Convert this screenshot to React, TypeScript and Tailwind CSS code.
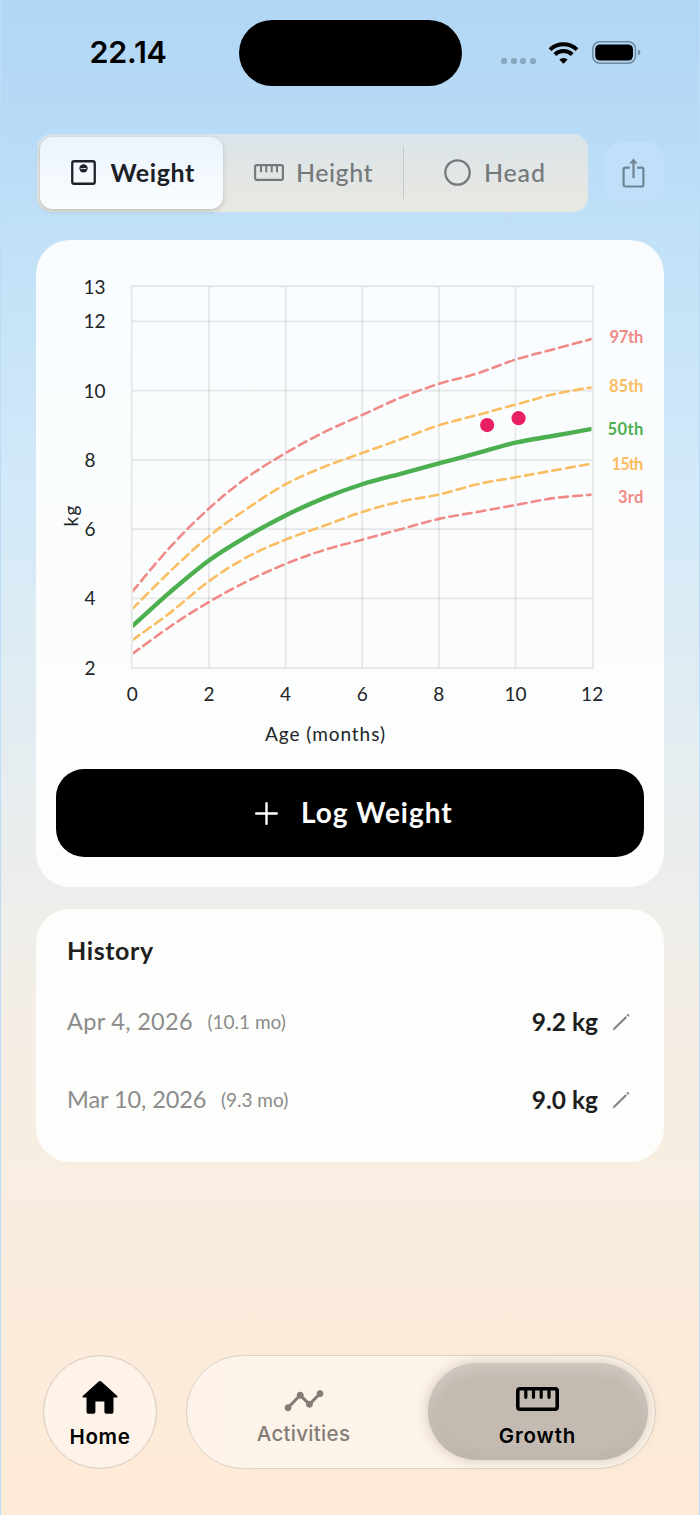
import { useState, type ReactNode } from 'react';
import clsx from 'clsx';

/**
 * GrowthScreen — weight-for-age chart with percentile curves,
 * measurement history and the bottom tab bar
 */

interface Curve {
  label: string;
  labelY: number;
  labelX: number;
  color: string;
  dashed: boolean;
  values: number[];
}

// One value per month, 0–12
const CURVES: Curve[] = [
  { label: '97th', labelX: 609.5, labelY: 342.5, color: '#f08a86', dashed: true, values: [4.2, 5.5, 6.6, 7.5, 8.2, 8.8, 9.3, 9.8, 10.2, 10.5, 10.9, 11.2, 11.5] },
  { label: '85th', labelX: 609, labelY: 392, color: '#fabd61', dashed: true, values: [3.7, 4.8, 5.8, 6.6, 7.3, 7.8, 8.2, 8.6, 9.0, 9.3, 9.6, 9.9, 10.1] },
  { label: '15th', labelX: 611.5, labelY: 470, color: '#fabd61', dashed: true, values: [2.8, 3.6, 4.5, 5.2, 5.7, 6.1, 6.5, 6.8, 7.0, 7.3, 7.5, 7.7, 7.9] },
  { label: '3rd', labelX: 618, labelY: 502.5, color: '#f08a86', dashed: true, values: [2.4, 3.2, 3.9, 4.5, 5.0, 5.4, 5.7, 6.0, 6.3, 6.5, 6.7, 6.9, 7.0] },
  { label: '50th', labelX: 607.5, labelY: 434.5, color: '#4caf50', dashed: false, values: [3.2, 4.2, 5.1, 5.8, 6.4, 6.9, 7.3, 7.6, 7.9, 8.2, 8.5, 8.7, 8.9] },
];

const MEASUREMENTS = [
  { date: 'Apr 4, 2026', age: '(10.1 mo)', months: 10.08, kg: 9.2 },
  { date: 'Mar 10, 2026', age: '(9.3 mo)', months: 9.26, kg: 9.0 },
];

const px = (month: number) => 132.3 + month * 38.32;
const py = (kg: number) => 667.8 - (kg - 2) * 34.63;

function curvePath(values: number[]) {
  const pts = values.map((v, i) => [px(i), py(v)]);
  let d = `M${pts[0][0]} ${pts[0][1]}`;
  for (let i = 1; i < pts.length; i++) {
    const a = pts[Math.max(i - 2, 0)];
    const b = pts[i - 1];
    const c = pts[i];
    const e = pts[Math.min(i + 1, pts.length - 1)];
    const k = 0.17;
    d += `C${b[0] + (c[0] - a[0]) * k} ${b[1] + (c[1] - a[1]) * k} ${c[0] - (e[0] - b[0]) * k} ${c[1] - (e[1] - b[1]) * k} ${c[0]} ${c[1]}`;
  }
  return d;
}

function ScaleIcon() {
  return (
    <svg width="25" height="25" viewBox="0 0 24 24" fill="none">
      <rect x="1.2" y="1.2" width="21.6" height="21.6" rx="1.8" stroke="currentColor" strokeWidth="2.2" />
      <circle cx="12" cy="8" r="4" fill="currentColor" />
      <path d="M9.2 8.2h5.6" stroke="#c9cfd6" strokeWidth="1.1" />
    </svg>
  );
}

function RulerIcon({ bold = false }: { bold?: boolean }) {
  return bold ? (
    <svg width="43" height="24" viewBox="0 0 43 24" fill="none" stroke="currentColor">
      <rect x="1.8" y="1.8" width="39.4" height="20.4" rx="2.2" strokeWidth="3.6" />
      <path d="M9.8 3v7.300M17.500 3v7.300M25.200 3v7.300M33 3v7.300" strokeWidth="3.2" strokeLinecap="round" />
    </svg>
  ) : (
    <svg width="30" height="17" viewBox="0 0 30 17" fill="none" stroke="currentColor">
      <rect x="1.1" y="1.1" width="27.8" height="14.8" rx="1.6" strokeWidth="2.2" />
      <path d="M7 1.500v6.700M12.300 1.500v6.700M17.700 1.500v6.700M23 1.500v6.700" strokeWidth="2" />
    </svg>
  );
}

function StatusBar() {
  return (
    <div className="flex h-[134px] shrink-0 items-start pt-5">
      <div className="w-[237.5px] pl-[88.500px] pt-[12px] font-['Inter'] text-[30.500px] font-semibold leading-[40px] tracking-[-0.2px]">
        22.14
      </div>
      <div className="h-[66px] w-[223px] rounded-full bg-black" />
      <div className="flex items-center pt-[19px]">
        <div className="ml-[39.500px] mt-[18px] flex gap-[3.400px]">
          {[0, 1, 2, 3].map((i) => (
            <span key={i} className="h-[6.400px] w-[6.200px] rounded-[2.500px] bg-[#89a7be]" />
          ))}
        </div>
        <svg className="ml-[12.500px] mt-[2px]" width="31" height="24" viewBox="0 0 31 24" fill="none" stroke="#000" strokeWidth="4">
          <path d="M2 8.600a19.800 19.800 0 0 1 27 0" />
          <path d="M6.800 13.500a12.800 12.800 0 0 1 17.400 0" />
          <path d="M15.500 22.800l-4.200-4.300a6.300 6.300 0 0 1 8.400 0z" fill="#000" stroke="none" />
        </svg>
        <svg className="ml-[13px] mt-[1px]" width="49" height="23" viewBox="0 0 49 23">
          <rect x=".8" y=".8" width="42.6" height="21.4" rx="7" fill="none" stroke="#6f8ba0" strokeWidth="1.5" />
          <rect x="3.2" y="3.4" width="37.8" height="16.2" rx="4.8" />
          <path d="M46 8.500q2.400 1.100 2.400 3t-2.400 3z" fill="#6f8ba0" />
        </svg>
      </div>
    </div>
  );
}

function Segment({
  active,
  onClick,
  className,
  children,
}: {
  active: boolean;
  onClick: () => void;
  className: string;
  children: ReactNode;
}) {
  return (
    <button
      onClick={onClick}
      className={clsx(
        'flex h-[72px] items-center whitespace-nowrap rounded-[13px] text-[25px]',
        active
          ? 'bg-linear-to-b from-[#ebf4fd] to-[#fafdfe] font-bold text-[#1b2126] shadow-[0_2px_5px_rgba(0,0,0,0.18)]'
          : 'font-medium text-[#74797b]',
        className,
      )}
    >
      {children}
    </button>
  );
}

function GrowthChart() {
  return (
    <svg
      width="627"
      height="529"
      viewBox="36 240 627 529"
      fontFamily="Lato, 'Open Sans', sans-serif"
      className="block shrink-0"
    >
      <defs>
        <clipPath id="plot">
          <rect x="133" y="287" width="458.5" height="381" />
        </clipPath>
      </defs>

      {/* Grid */}
      <g stroke="#000" strokeOpacity=".085" strokeWidth="1.8">
        <rect x="131.7" y="286.2" width="461.4" height="381.8" fill="none" />
        {[2, 4, 6, 8, 10].map((m) => (
          <path key={m} d={`M${px(m)} 287V667.5`} />
        ))}
        {[4, 6, 8, 10, 12].map((kg) => (
          <path key={kg} d={`M132.5 ${py(kg) - 0.2}H592.5`} />
        ))}
      </g>

      {/* Percentile curves */}
      <g clipPath="url(#plot)" fill="none">
        {CURVES.map((c) => (
          <path
            key={c.label}
            d={curvePath(c.values)}
            stroke={c.color}
            strokeWidth={c.dashed ? 2.6 : 4.4}
            strokeLinecap={c.dashed ? 'round' : 'butt'}
            strokeDasharray={c.dashed ? '8.7 5.25' : undefined}
          />
        ))}
      </g>

      {/* Logged measurements */}
      {MEASUREMENTS.map((m) => (
        <circle key={m.date} cx={px(m.months)} cy={py(m.kg) - 0.3} r="8.1" fill="#e91e63" stroke="#fff" strokeWidth="2" />
      ))}

      {/* Axis labels */}
      <g fontSize="19" fill="#222527">
        {[2, 4, 6, 8, 10, 12, 13].map((kg) => (
          <text key={kg} x={kg > 9 ? 83.5 : 84.5} y={py(kg) + 6.8}>
            {kg}
          </text>
        ))}
        {[0, 2, 4, 6, 8, 10, 12].map((m) => (
          <text key={m} x={px(m)} y="701" textAnchor="middle">
            {m}
          </text>
        ))}
        <text x="265" y="740.5" textLength="120">
          Age (months)
        </text>
        <text x="77.5" y="526.5" transform="rotate(-90 77.5 526.5)" textLength="21">
          kg
        </text>
      </g>
      <g fontSize="16.5" fontWeight="700">
        {CURVES.map((c) => (
          <text key={c.label} x={c.labelX} y={c.labelY} fill={c.color} textLength={643.3 - c.labelX}>
            {c.label}
          </text>
        ))}
      </g>
    </svg>
  );
}

function HistoryRow({ date, age, kg, dateClass }: { date: string; age: string; kg: number; dateClass: string }) {
  return (
    <div className="flex h-[78px] items-center whitespace-nowrap">
      <span className={clsx('text-[23.500px] text-[#8b8c8b]', dateClass)}>{date}</span>
      <span className="ml-[14.500px] text-[19px] text-[#8b8c8b]">{age}</span>
      <span className="ml-auto text-[24.500px] font-bold text-[#1d1f1f]">{kg.toFixed(1)} kg</span>
      <svg className="ml-[14px]" width="18" height="18" viewBox="0 0 18 18" stroke="#858583" strokeLinecap="round">
        <path d="M1.200 16.600L2 14.800 13.500 3.500l1.200 1.200L3.200 16z" fill="#858583" strokeWidth=".7" />
        <path d="M15.700 2l.5.5" strokeWidth="2.1" />
      </svg>
    </div>
  );
}

export default function App() {
  const [metric, setMetric] = useState('weight');

  return (
    <div className="flex h-[1515px] w-[700px] flex-col overflow-hidden border-x border-[#bddcf5] font-[Lato,'Open_Sans',sans-serif] text-black [background-image:linear-gradient(180deg,#b1d7f5_0%,#b7daf6_8%,#c2e1f7_16%,#d2e9fa_32%,#daebf4_40%,#e6edf0_51%,#eeeeeb_60%,#f4eee6_67%,#f7eee2_76%,#fbebdb_88%,#feebd7_100%)]">
      <StatusBar />

      {/* Metric selector */}
      <div className="flex h-[77px] shrink-0 items-center px-[35.500px]">
        <div className="flex h-[78px] w-[552px] items-center rounded-[15px] bg-linear-to-b from-[#dae4e9] to-[#eae8e1] px-[3px]">
          <Segment active={metric === 'weight'} onClick={() => setMetric('weight')} className="w-[183px] pl-[31px]">
            <ScaleIcon />
            <span className="ml-[15px] tracking-[0.600px]">Weight</span>
          </Segment>
          <Segment active={metric === 'height'} onClick={() => setMetric('height')} className="w-[180px] pl-[31.500px]">
            <RulerIcon />
            <span className="ml-[12px] tracking-[0.500px]">Height</span>
          </Segment>
          <div className="h-[53px] w-[1.500px] bg-[#c5cac9]" />
          <Segment active={metric === 'head'} onClick={() => setMetric('head')} className="flex-1 pl-[40px]">
            <svg width="27" height="27" viewBox="0 0 27 27" fill="none">
              <circle cx="13.5" cy="13.5" r="12.2" stroke="currentColor" strokeWidth="2.3" />
            </svg>
            <span className="ml-[13px] tracking-[0.800px]">Head</span>
          </Segment>
        </div>
        <button
          aria-label="Share"
          className="ml-[15.500px] flex h-[61px] w-[60px] items-center justify-center rounded-[18px] bg-[#c1dff8] text-[#6e8494]"
        >
          <svg width="23" height="30" viewBox="0 0 22 30" fill="none" stroke="currentColor" strokeWidth="2.2">
            <path d="M7.300 9.700H2.800A1.700 1.700 0 0 0 1.100 11.400v15.400a1.700 1.700 0 0 0 1.700 1.700h16.400a1.700 1.700 0 0 0 1.700-1.700V11.400a1.700 1.700 0 0 0-1.700-1.700h-4.500" />
            <path d="M11 4v16" />
            <path d="M11 .6l4.200 4.800H6.800z" fill="currentColor" stroke="none" />
          </svg>
        </button>
      </div>

      {/* Chart card */}
      <div className="mx-[35px] mt-[29px] flex h-[647px] shrink-0 flex-col rounded-[34px] bg-linear-to-b from-[#f9fcff] via-[#fbfdfd] to-[#fdfdfd]">
        <GrowthChart />
        <button className="mx-5 flex h-[88px] shrink-0 items-center rounded-[28px] bg-black pl-[199px] text-[28px] font-bold text-white">
          <svg width="23" height="23" viewBox="0 0 23 23" stroke="#fff" strokeWidth="2.4" strokeLinecap="round">
            <path d="M11.500 1.200v20.600M1.200 11.500h20.600" />
          </svg>
          <span className="-mt-[2px] ml-[23px] tracking-[1px]">Log Weight</span>
        </button>
      </div>

      {/* History card */}
      <div className="mx-[35px] mt-[22px] h-[253px] shrink-0 rounded-[34px] bg-[#fdfdfb] pl-[31px] pr-[34px] pt-[24px]">
        <h2 className="-mt-px h-[51px] text-[25px] font-bold leading-[36px] tracking-[0.600px] text-[#1f2121]">History</h2>
        {MEASUREMENTS.map((m, i) => (
          <HistoryRow
            key={m.date}
            date={m.date}
            age={m.age}
            kg={m.kg}
            dateClass={i === 0 ? 'tracking-[0.300px]' : 'tracking-[-0.080px]'}
          />
        ))}
      </div>

      {/* Tab bar */}
      <nav className="mb-[46.500px] mt-auto flex shrink-0 gap-[28.500px] pl-[42px] font-['Inter'] text-[20.500px] font-medium leading-[24px]">
        <button className="flex h-[114px] w-[114px] flex-col items-center rounded-full border-[1.500px] border-[#d9cbbc] bg-[#fdf3e9] pt-[25.500px]">
          <svg width="36" height="33" viewBox="0 0 36 33">
            <path d="M18 0q.7 0 1.300.6L35.300 15q.8 1.200-.7 1.500H31.500V31q0 1.800-1.800 1.800h-5.500q-1.800 0-1.800-1.800V20.500h-9V31q0 1.800-1.800 1.800H6.300Q4.500 32.800 4.500 31V16.500H1.400Q-.1 16.200.7 15L16.700.6Q17.300 0 18 0z" />
          </svg>
          <span className="mt-[10.500px] font-semibold tracking-[0.700px]">Home</span>
        </button>
        <div className="flex h-[114px] w-[470px] items-center rounded-full border-[1.500px] border-[#ddd2c6] bg-linear-to-r from-[#fdf3ea] to-[#fef5e9] pr-[7px]">
          <button className="flex h-full flex-1 flex-col items-center pr-[7px] pt-[34px] text-[#827d77]">
            <svg width="40" height="22" viewBox="0 0 40 22" fill="currentColor" stroke="currentColor">
              <path d="M4 17.800L16.200 5.200 25.400 14.300 36 3.600" fill="none" strokeWidth="3" />
              <circle cx="4" cy="17.8" r="3" />
              <circle cx="16.2" cy="5.2" r="3" />
              <circle cx="25.4" cy="14.3" r="3" />
              <circle cx="36" cy="3.6" r="3" />
            </svg>
            <span className="mt-[10.500px] tracking-[0.300px]">Activities</span>
          </button>
          <button className="flex h-[97px] w-[220px] flex-col items-center rounded-full bg-[#c3bbb1] pt-[24px] shadow-[0_0_14px_rgba(100,80,60,0.28),inset_0_6px_14px_rgba(255,255,255,0.28),inset_0_-4px_12px_rgba(120,110,100,0.12)]">
            <RulerIcon bold />
            <span className="mt-[13px] font-semibold tracking-[0.850px]">Growth</span>
          </button>
        </div>
      </nav>
    </div>
  );
}
